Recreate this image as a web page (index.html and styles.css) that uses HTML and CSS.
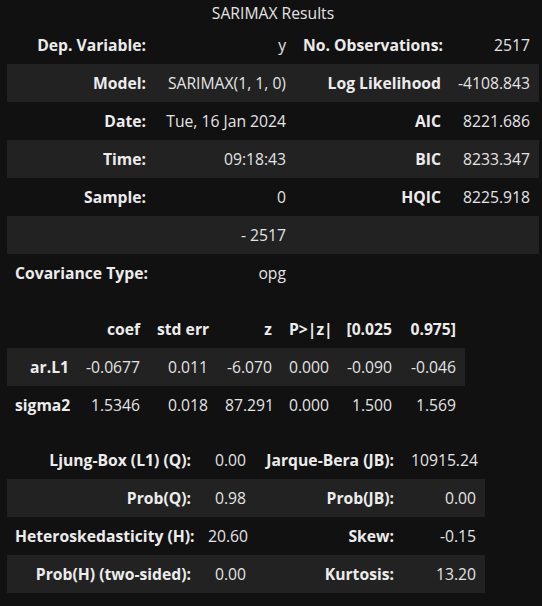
FILE: index.html
```html
<!DOCTYPE html>
<html>
<head>
<meta charset="utf-8">
<title>SARIMAX Results</title>
<link rel="stylesheet" href="styles.css">
</head>
<body>
<div class="output">
  <table class="simpletable t1">
    <caption>SARIMAX Results</caption>
    <colgroup><col class="c148"><col class="c140"><col class="c155"><col class="c89"></colgroup>
    <tr><th>Dep. Variable:</th><td>y</td><th>No. Observations:</th><td>2517</td></tr>
    <tr><th>Model:</th><td>SARIMAX(1, 1, 0)</td><th>Log Likelihood</th><td>-4108.843</td></tr>
    <tr><th>Date:</th><td>Tue, 16 Jan 2024</td><th>AIC</th><td>8221.686</td></tr>
    <tr><th>Time:</th><td>09:18:43</td><th>BIC</th><td>8233.347</td></tr>
    <tr><th>Sample:</th><td>0</td><th>HQIC</th><td>8225.918</td></tr>
    <tr><th></th><td>- 2517</td><th></th><td></td></tr>
    <tr><th>Covariance Type:</th><td>opg</td><th></th><td></td></tr>
  </table>

  <table class="simpletable t2">
    <colgroup><col class="c71"><col class="c71"><col class="c68"><col class="c64"><col class="c57"><col class="c63"><col class="c64"></colgroup>
    <tr><td></td><th>coef</th><th>std err</th><th>z</th><th>P&gt;|z|</th><th>[0.025</th><th>0.975]</th></tr>
    <tr><th>ar.L1</th><td>-0.0677</td><td>0.011</td><td>-6.070</td><td>0.000</td><td>-0.090</td><td>-0.046</td></tr>
    <tr><th>sigma2</th><td>1.5346</td><td>0.018</td><td>87.291</td><td>0.000</td><td>1.500</td><td>1.569</td></tr>
  </table>

  <table class="simpletable t3">
    <colgroup><col class="c193"><col class="c55"><col class="c148"><col class="c82"></colgroup>
    <tr><th>Ljung-Box (L1) (Q):</th><td>0.00</td><th>Jarque-Bera (JB):</th><td>10915.24</td></tr>
    <tr><th>Prob(Q):</th><td>0.98</td><th>Prob(JB):</th><td>0.00</td></tr>
    <tr><th>Heteroskedasticity (H):</th><td>20.60</td><th>Skew:</th><td>-0.15</td></tr>
    <tr><th>Prob(H) (two-sided):</th><td>0.00</td><th>Kurtosis:</th><td>13.20</td></tr>
  </table>
</div>
</body>
</html>
```
FILE: styles.css
```css
html, body {
  margin: 0;
  padding: 0;
  background: #111111;
}

body {
  color: #e4e4e4;
  font-family: "Open Sans", "Noto Sans", sans-serif;
  font-size: 15.7px;
}

.output {
  padding: 2px 0 0 7px;
  display: flex;
  flex-direction: column;
  align-items: flex-start;
  gap: 18px;
}

.simpletable {
  border-collapse: collapse;
  border-spacing: 0;
  table-layout: fixed;
}

.t1 { width: 532px; }
.t2 { width: 458px; }
.t3 { width: 478px; margin-top: -1px; }

.simpletable caption {
  text-align: center;
  line-height: 22px;
  padding-bottom: 2px;
  font-weight: 400;
  color: #e4e4e4;
}

.simpletable th,
.simpletable td {
  text-align: right;
  line-height: 22px;
  padding: 8px 9px 8px 8px;
  white-space: nowrap;
  overflow: visible;
  height: 22px;
  box-sizing: content-box;
}

.simpletable th {
  font-weight: 700;
  color: #ececec;
}

.simpletable td {
  font-weight: 400;
}

.simpletable tr:nth-child(even) th,
.simpletable tr:nth-child(even) td {
  background: #222222;
}

.c148 { width: 148px; }
.c140 { width: 140px; }
.c155 { width: 155px; }
.c89 { width: 89px; }
.c71 { width: 71px; }
.c68 { width: 68px; }
.c64 { width: 64px; }
.c57 { width: 57px; }
.c63 { width: 63px; }
.c193 { width: 193px; }
.c55 { width: 55px; }
.c82 { width: 82px; }
```
